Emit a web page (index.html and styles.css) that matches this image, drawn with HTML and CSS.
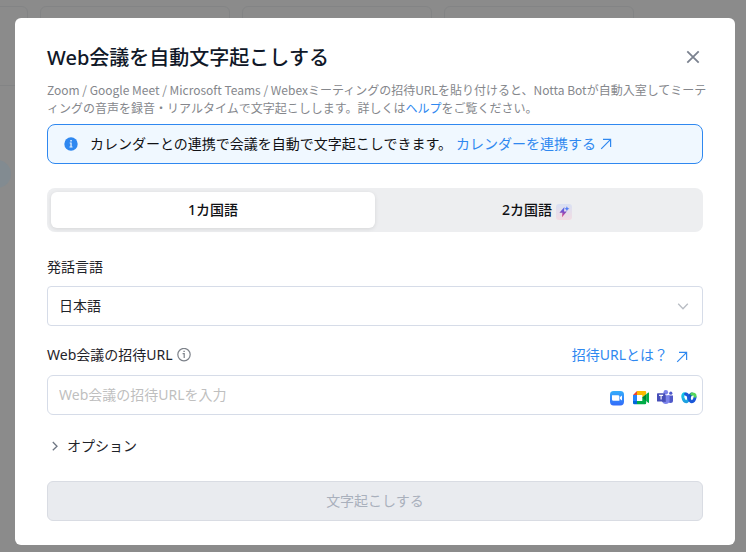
FILE: index.html
```html
<!DOCTYPE html>
<html lang="ja">
<head>
<meta charset="utf-8">
<meta name="viewport" content="width=device-width, initial-scale=1">
<title>Web会議を自動文字起こしする</title>
<link rel="stylesheet" href="styles.css">
</head>
<body>
<div class="backdrop" aria-hidden="true">
  <div class="cards"><i class="card"></i><i class="card"></i><i class="card"></i><i class="card"></i></div>
  <i class="bubble"></i>
</div>
<main class="overlay">
  <section class="modal" role="dialog" aria-labelledby="title">
    <header class="head">
      <h1 class="title" id="title">Web会議を自動文字起こしする</h1>
      <button class="close" type="button" aria-label="閉じる">
        <svg width="20" height="20" viewBox="0 0 20 20" fill="none" stroke="#7b828f" stroke-width="1.8"><path d="M4.3 3.3l11.4 11.4M15.7 3.3L4.3 14.7"/></svg>
      </button>
    </header>
    <p class="desc">Zoom / Google Meet / Microsoft Teams / Webexミーティングの招待URLを貼り付けると、Notta Botが自動入室してミーティングの音声を録音・リアルタイムで文字起こしします。詳しくは<a class="link" href="#">ヘルプ</a>をご覧ください。</p>
    <div class="notice">
      <svg width="14" height="14" viewBox="0 0 14 14"><circle cx="7" cy="7" r="6.7" fill="#2f88f0"/><path d="M6.3 3h1.5v1.5H6.3zM5.7 5.6h2v4h.8v.8h-3v-.8h.9V6.4h-.7z" fill="#e3f1ff"/></svg>
      <span>カレンダーとの連携で会議を自動で文字起こしできます。</span>
      <a class="link arrow-link" href="#">カレンダーを連携する
        <svg width="12" height="12" viewBox="0 0 12 12" fill="none" stroke="currentColor" stroke-width="1.2"><path d="M1.2 10.8L10.4 1.6M3 1.4h7.6V9"/></svg>
      </a>
    </div>
    <div class="tabs" role="tablist">
      <button class="tab active" type="button" role="tab" aria-selected="true">1カ国語</button>
      <button class="tab" type="button" role="tab" aria-selected="false">2カ国語
        <svg class="spark" width="16" height="16" viewBox="0 0 16 16">
          <defs>
            <linearGradient id="tile" x1="0" y1="0" x2="0" y2="1"><stop offset="0" stop-color="#d9e0f3"/><stop offset="1" stop-color="#f2dce2"/></linearGradient>
            <linearGradient id="bolt" x1="0" y1="0" x2="0" y2="1"><stop offset="0" stop-color="#4474f5"/><stop offset=".5" stop-color="#804bc4"/><stop offset="1" stop-color="#f04a78"/></linearGradient>
          </defs>
          <rect width="16" height="16" rx="3" fill="url(#tile)"/>
          <path d="M8.4 3L3.4 8.8h3L6 13.2l4.8-5.6H8z" fill="url(#bolt)"/>
          <path d="M10.9 2.3l.8 1.7 1.7.8-1.7.8-.8 1.7-.8-1.7-1.7-.8 1.7-.8z" fill="#527df5"/>
        </svg>
      </button>
    </div>
    <div class="label-row first"><label for="lang">発話言語</label></div>
    <div class="select-wrap">
      <select class="control select" id="lang"><option>日本語</option></select>
      <svg class="chevron" width="12" height="12" viewBox="0 0 12 12" fill="none" stroke="#b9bdc4" stroke-width="1.3"><path d="M1.2 3.8L6 8.8l4.8-5"/></svg>
    </div>
    <div class="label-row">
      <label for="url">Web会議の招待URL</label>
      <svg class="info" width="14" height="14" viewBox="0 0 14 14" fill="none" stroke="#7d828a"><circle cx="7" cy="6.6" r="6.2" stroke-width="1.2"/><path d="M5.6 5.6h1.6V10M6.4 3.4h1.4" stroke-width="1.2"/></svg>
      <a class="link help" href="#">招待URLとは？
        <svg width="12" height="12" viewBox="0 0 12 12" fill="none" stroke="currentColor" stroke-width="1.2"><path d="M1.2 10.8L10.4 1.6M3 1.4h7.6V9"/></svg>
      </a>
    </div>
    <div class="control url-box">
      <input class="url" id="url" type="text" placeholder="Web会議の招待URLを入力">
      <span class="apps" aria-hidden="true">
        <svg width="16" height="16" viewBox="0 0 16 16">
          <defs><linearGradient id="zoom" x1="0" y1="0" x2="0" y2="1"><stop offset="0" stop-color="#35adfb"/><stop offset="1" stop-color="#326bfa"/></linearGradient></defs>
          <rect x="1" y="1" width="14" height="14.4" rx="3.6" fill="url(#zoom)"/><path d="M3 5.2h6a1.4 1.4 0 0 1 1.4 1.4v4.2H4.4A1.4 1.4 0 0 1 3 9.4zM11 7l2-1.6v5.2L11 9z" fill="#fff"/>
        </svg>
        <svg width="16" height="16" viewBox="0 0 16 16">
          <path d="M0 5l4-4v4z" fill="#ea4335"/><path d="M0 5h4v6H0z" fill="#2684fc"/><path d="M0 11h4v3.3H1.2A1.2 1.2 0 0 1 0 13.1z" fill="#0066da"/><path d="M4 1h8a1.2 1.2 0 0 1 1.2 1.2v2L9.3 7.6V5H4z" fill="#ffba00"/><path d="M4 11h5.3V7.6l3.9-3.4v8.9a1.2 1.2 0 0 1-1.2 1.2H4z" fill="#00ac47"/><path d="M9.3 7.6l3.9-3.4v6.9z" fill="#00832d"/><path d="M13.2 4.3L15.2 2.6c.4-.3.8-.1.8.4v9.4c0 .5-.4.7-.8.4l-2-1.7z" fill="#00ac47"/>
        </svg>
        <svg width="16" height="16" viewBox="0 0 16 16">
          <circle cx="13.8" cy="3.2" r="1.6" fill="#4f59ca"/><path d="M11 5.4h5v5a2.5 2.5 0 0 1-5 0z" fill="#5059c9"/><circle cx="8.8" cy="2.3" r="2.3" fill="#7b83eb"/><path d="M5 5.2h7.6v5.8a3.9 3.9 0 0 1-7.6 0z" fill="#7b83eb"/><path d="M6 5.2h3V12H5.2z" fill="#5a62c3"/><rect y="3.2" width="8.2" height="8.4" rx=".7" fill="#464eb8"/><path d="M2.1 5.4h4M4.1 5.4v4.2" stroke="#fff" stroke-width="1.1"/>
        </svg>
        <svg width="16" height="16" viewBox="0 0 16 16" fill="none" stroke-width="3" stroke-linecap="round">
          <defs><linearGradient id="wxl" x1="0" y1="0" x2="0" y2="1"><stop offset="0" stop-color="#12c8e8"/><stop offset="1" stop-color="#1e9fe0"/></linearGradient></defs>
          <path d="M4.8 4.1C2.4 3.2 1.5 4.7 1.9 7.2c.5 2.7 1.7 4.5 3.2 4.5 1.4 0 2.2-1.2 2.9-3.4" stroke="url(#wxl)"/><path d="M8 8.3c.8-2.6 1.4-4.3 3.1-4.3" stroke="#0752bc"/><path d="M4.6 4c1.8 0 2.7 1.8 3.4 4.3.7 2.2 1.5 3.4 2.9 3.4 1.6 0 2.7-2 3.2-4.5" stroke="#1a57d8"/><path d="M10.8 4c2.4-.4 3.4.7 3.3 2.2" stroke="#54d65d"/>
        </svg>
      </span>
    </div>
    <button class="options" type="button" aria-expanded="false">
      <svg width="12" height="12" viewBox="0 0 12 12" fill="none" stroke="#6f7784" stroke-width="1.3"><path d="M2.8 2L7 6.2l-4.2 4"/></svg>
      オプション
    </button>
    <button class="submit" type="button" disabled>文字起こしする</button>
  </section>
</main>
</body>
</html>
```

FILE: styles.css
```css
* { box-sizing: border-box; }

body {
  margin: 0;
  min-height: 100vh;
  background: #8b8b8b;
  color: #1f2329;
  font: 14px/22px "Noto Sans", "Noto Sans CJK JP", sans-serif;
}

button, input, select { font: inherit; color: inherit; }
button { padding: 0; border: 0; background: none; cursor: pointer; }
svg { display: block; flex: none; }

.link { color: #2f88f0; text-decoration: none; }

/* Dimmed page behind the dialog */
.backdrop { position: fixed; inset: 0; overflow: hidden; }
.cards { display: flex; gap: 12px; margin: 6px 0 0 -162px; }
.card { flex: none; width: 190px; height: 80px; border: 1px solid #838485; border-radius: 6px; }
.bubble { display: block; width: 28px; height: 28px; margin: 74px 0 0 -17px; border-radius: 50%; background: #828b91; }

.overlay { position: relative; padding: 18px 11px 7px 15px; }
.modal {
  max-width: 720px;
  margin: 0 auto;
  padding: 24px 32px;
  border-radius: 6px;
  background: #fff;
}

.head { display: flex; align-items: center; justify-content: space-between; }
.title { margin: 0; font-size: 20px; line-height: 32px; font-weight: 500; color: #101828; }
.close { display: flex; }
/* Reaches slightly past the content edge so the first line holds its last kana */
.desc {
  margin: 7px -4px 7px 0;
  font-family: "Noto Sans CJK JP", "Noto Sans", sans-serif;
  font-size: 12px;
  line-height: 18px;
  line-break: loose;
  color: #85878c;
}

.notice {
  display: flex;
  align-items: center;
  min-height: 40px;
  padding: 0 16px;
  border: 1px solid #2f88f0;
  border-radius: 8px;
  background: #f0f8ff;
  color: #101114;
}
.notice span { margin: 0 4px 0 12px; }
.arrow-link { display: flex; align-items: center; gap: 4px; }

.tabs {
  display: flex;
  margin-top: 24px;
  padding: 4px;
  border-radius: 8px;
  background: #edeef0;
}
.tab {
  display: flex;
  flex: 1;
  align-items: center;
  justify-content: center;
  gap: 4px;
  height: 36px;
  border-radius: 6px;
  color: #101114;
  font-weight: 500;
}
.tab.active { background: #fff; box-shadow: 0 1px 4px rgba(0, 0, 0, .1); }
.spark { margin-top: 4px; }

.label-row { display: flex; align-items: center; min-height: 24px; margin: 17px 0 8px; }
.label-row.first { margin: 23px 0 7px; }
.info { margin-left: 4px; }
.help { display: flex; align-items: center; gap: 8px; margin: 0 15px 0 auto; }
.help svg { margin-top: 4px; }

.control {
  width: 100%;
  height: 40px;
  border: 1px solid #d6dce8;
  background: #fff;
}
.select-wrap { position: relative; }
.select { display: block; padding: 0 40px 0 11px; border-radius: 4px; appearance: none; }
.chevron { position: absolute; top: 14px; right: 14px; pointer-events: none; }

.url-box { display: flex; align-items: center; padding: 0 5px 0 11px; border-radius: 6px; }
.url { flex: 1; min-width: 0; padding: 0; border: 0; outline: 0; background: none; }
.url::placeholder { color: #bfbfbf; opacity: 1; }
.apps { display: flex; gap: 8px; margin-top: 6px; }

.options { display: flex; align-items: center; gap: 5px; margin: 20px 0 24px; }
.options svg { margin-left: 3px; }

.submit {
  display: block;
  width: 100%;
  height: 40px;
  border: 1px solid #d9dce3;
  border-radius: 6px;
  background: #e9ebef;
  color: #a9b0bc;
  cursor: default;
}
```
